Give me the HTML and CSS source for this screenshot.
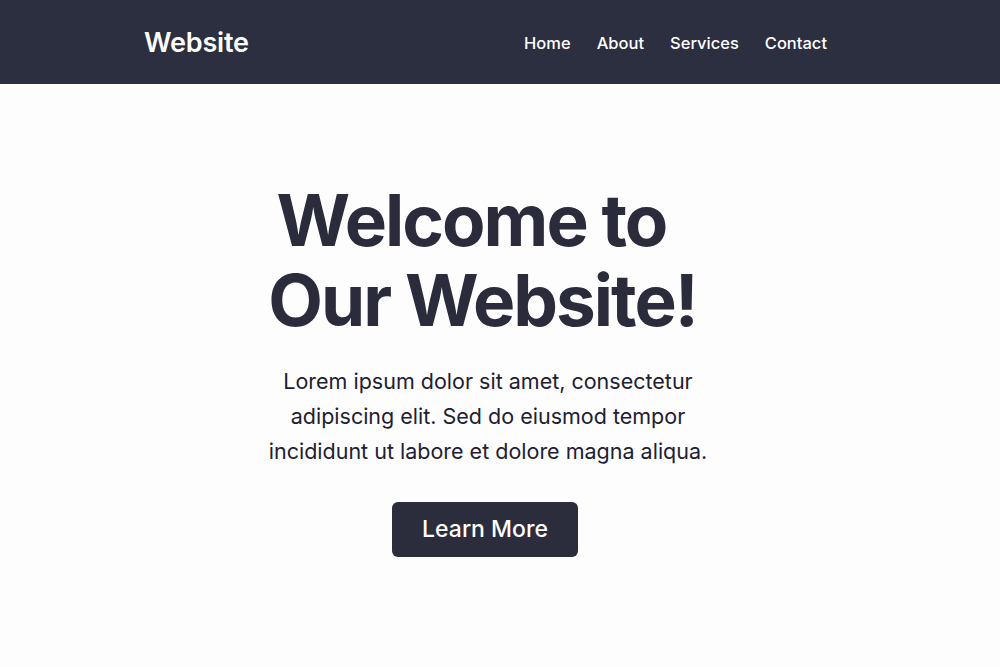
FILE: index.html
```html
<!DOCTYPE html>
<html lang="en">
<head>
    <meta charset="UTF-8">
    <meta name="viewport" content="width=device-width, initial-scale=1.0">
    <title>Website</title>
    <link rel="stylesheet" href="styles.css">
</head>
<body>
    <!-- Top Navigation -->
    <header class="site-header">
        <div class="header-inner">
            <a href="#" class="logo">Website</a>
            <nav class="nav">
                <a href="#">Home</a>
                <a href="#">About</a>
                <a href="#">Services</a>
                <a href="#">Contact</a>
            </nav>
        </div>
    </header>

    <!-- Hero -->
    <main class="hero">
        <h1><span class="first-line">Welcome to</span><br>Our Website!</h1>
        <p class="lead">
            Lorem ipsum dolor sit amet, consectetur<br>
            adipiscing elit. Sed do eiusmod tempor<br>
            incididunt ut labore et dolore magna aliqua.
        </p>
        <a href="#" class="btn">Learn More</a>
    </main>
</body>
</html>
```

FILE: styles.css
```css
:root {
    --header-bg-color: #2c2f3f;
    --header-text-color: #ffffff;
    --body-bg-color: #fdfdfe;
    --heading-text-color: #2a2c3b;
    --text-color: #1e2030;
    --button-bg-color: #2b2d3d;
    --button-text-color: #ffffff;
}

body {
    margin: 0;
    padding: 0;
    font-family: 'Inter', 'Noto Sans', sans-serif;
    background-color: var(--body-bg-color);
    height: 100vh;
    overflow: hidden;
}

a {
    text-decoration: none;
}

/* Header */
.site-header {
    background-color: var(--header-bg-color);
    height: 84px;
}

.header-inner {
    display: flex;
    justify-content: space-between;
    align-items: center;
    height: 100%;
    padding: 0 173px 0 144px;
}

.logo {
    color: var(--header-text-color);
    font-size: 27px;
    font-weight: 600;
    letter-spacing: -0.2px;
}

.nav {
    display: flex;
    gap: 26px;
    padding-top: 2px;
}

.nav a {
    color: var(--header-text-color);
    font-size: 16.5px;
    font-weight: 500;
}

/* Hero */
.hero {
    display: flex;
    flex-direction: column;
    align-items: center;
    text-align: center;
    padding: 96px 35px 0 0;
}

h1 {
    margin: 0;
    color: var(--heading-text-color);
    font-size: 71px;
    line-height: 80px;
    font-weight: 700;
    letter-spacing: -2px;
}

.first-line {
    padding-right: 22px;
}

.lead {
    margin: 24px 0 0;
    padding-left: 11px;
    color: var(--text-color);
    font-size: 21.5px;
    line-height: 35px;
}

.btn {
    margin: 33px 0 0 5px;
    display: inline-block;
    padding: 0 30px;
    height: 55px;
    line-height: 55px;
    border-radius: 6px;
    background-color: var(--button-bg-color);
    color: var(--button-text-color);
    font-size: 23px;
    font-weight: 500;
}
```
